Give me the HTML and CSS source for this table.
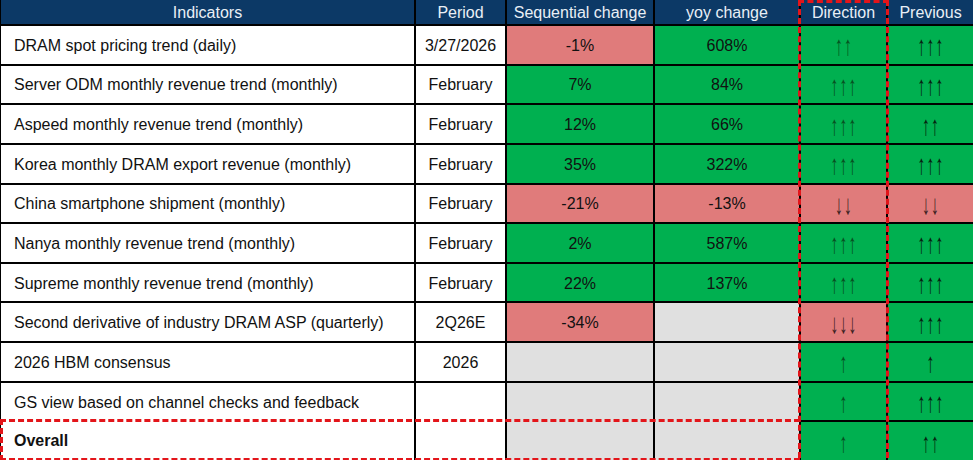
FILE: index.html
```html
<!DOCTYPE html>
<html>
<head>
<meta charset="utf-8">
<link rel="stylesheet" href="styles.css">
</head>
<body>
<div class="wrap">
  <div class="grid">
    <div class="hd">Indicators</div>
    <div class="hd">Period</div>
    <div class="hd">Sequential change</div>
    <div class="hd">yoy change</div>
    <div class="hd">Direction</div>
    <div class="hd">Previous</div>

    <div class="name">DRAM spot pricing trend (daily)</div>
    <div class="per">3/27/2026</div>
    <div class="c red">-1%</div>
    <div class="c grn">608%</div>
    <div class="c grn dir"><span class="ar">↑↑</span></div>
    <div class="c grn prev"><span class="ar">↑↑↑</span></div>

    <div class="name">Server ODM monthly revenue trend (monthly)</div>
    <div class="per">February</div>
    <div class="c grn">7%</div>
    <div class="c grn">84%</div>
    <div class="c grn dir"><span class="ar">↑↑↑</span></div>
    <div class="c grn prev"><span class="ar">↑↑↑</span></div>

    <div class="name">Aspeed monthly revenue trend (monthly)</div>
    <div class="per">February</div>
    <div class="c grn">12%</div>
    <div class="c grn">66%</div>
    <div class="c grn dir"><span class="ar">↑↑↑</span></div>
    <div class="c grn prev"><span class="ar">↑↑</span></div>

    <div class="name">Korea monthly DRAM export revenue (monthly)</div>
    <div class="per">February</div>
    <div class="c grn">35%</div>
    <div class="c grn">322%</div>
    <div class="c grn dir"><span class="ar">↑↑↑</span></div>
    <div class="c grn prev"><span class="ar">↑↑↑</span></div>

    <div class="name">China smartphone shipment (monthly)</div>
    <div class="per">February</div>
    <div class="c red">-21%</div>
    <div class="c red">-13%</div>
    <div class="c red dir"><span class="ar">↓↓</span></div>
    <div class="c red prev"><span class="ar">↓↓</span></div>

    <div class="name">Nanya monthly revenue trend (monthly)</div>
    <div class="per">February</div>
    <div class="c grn">2%</div>
    <div class="c grn">587%</div>
    <div class="c grn dir"><span class="ar">↑↑↑</span></div>
    <div class="c grn prev"><span class="ar">↑↑↑</span></div>

    <div class="name">Supreme monthly revenue trend (monthly)</div>
    <div class="per">February</div>
    <div class="c grn">22%</div>
    <div class="c grn">137%</div>
    <div class="c grn dir"><span class="ar">↑↑↑</span></div>
    <div class="c grn prev"><span class="ar">↑↑↑</span></div>

    <div class="name">Second derivative of industry DRAM ASP (quarterly)</div>
    <div class="per">2Q26E</div>
    <div class="c red">-34%</div>
    <div class="c gry"></div>
    <div class="c red dir"><span class="ar">↓↓↓</span></div>
    <div class="c grn prev"><span class="ar">↑↑↑</span></div>

    <div class="name">2026 HBM consensus</div>
    <div class="per">2026</div>
    <div class="c gry"></div>
    <div class="c gry"></div>
    <div class="c grn dir"><span class="ar">↑</span></div>
    <div class="c grn prev"><span class="ar">↑</span></div>

    <div class="name">GS view based on channel checks and feedback</div>
    <div class="per"></div>
    <div class="c gry"></div>
    <div class="c gry"></div>
    <div class="c grn dir"><span class="ar">↑</span></div>
    <div class="c grn prev"><span class="ar">↑↑↑</span></div>

    <div class="name ov bold">Overall</div>
    <div class="per ov"></div>
    <div class="c gry ov"></div>
    <div class="c gry ov"></div>
    <div class="c grn dir"><span class="ar">↑</span></div>
    <div class="c grn prev"><span class="ar">↑↑</span></div>
  </div>
  <div class="box-dir"></div>
  <div class="box-overall"></div>
</div>
</body>
</html>
```

FILE: styles.css
```css
html, body {
  margin: 0;
  padding: 0;
  background: #ffffff;
}

.wrap {
  position: relative;
  width: 973px;
  height: 460px;
  overflow: hidden;
}

.grid {
  display: grid;
  grid-template-columns: 413px 89px 146px 144px 85px 85px;
  grid-template-rows: 24px repeat(11, 1fr);
  column-gap: 2px;
  row-gap: 2px;
  padding-left: 1px;
  height: 460px;
  background: #000000;
  font-family: "Liberation Sans", Arial, sans-serif;
  font-size: 16px;
  color: #111111;
}

.grid > div {
  display: flex;
  align-items: center;
  justify-content: center;
  white-space: nowrap;
  padding-top: 2px;
}

.hd {
  background: #0c3966;
  color: #e9eff6;
  font-size: 16px;
}

.name {
  background: #ffffff;
  justify-content: flex-start !important;
  padding-left: 13px;
}

.per {
  background: #ffffff;
}

.red {
  background: #e07b7b;
}

.grn {
  background: #00b050;
}

.gry {
  background: #e0e0e0;
}

.ar {
  display: inline-block;
  font-family: "Liberation Sans", Arial, sans-serif;
  font-size: 16px;
  line-height: 16px;
  letter-spacing: 1px;
  padding-left: 1px;
  transform: scaleY(1.75);
  margin-top: 1px;
}

.dir {
  color: #07501f;
}

.red.dir {
  color: #3a2020;
}

.prev {
  color: #06200e;
}

.red.prev {
  color: #3a2020;
}

.bold {
  font-weight: bold;
}

.ov {
  margin-top: -2px;
}

.box-dir {
  position: absolute;
  left: 798px;
  top: 0;
  width: 85px;
  height: 470px;
  border: 3px dashed #e3151a;
  pointer-events: none;
}

.box-overall {
  position: absolute;
  left: 0;
  top: 419px;
  width: 797px;
  height: 36px;
  border: 3px dashed #e3151a;
  border-right: none;
  pointer-events: none;
}
```
